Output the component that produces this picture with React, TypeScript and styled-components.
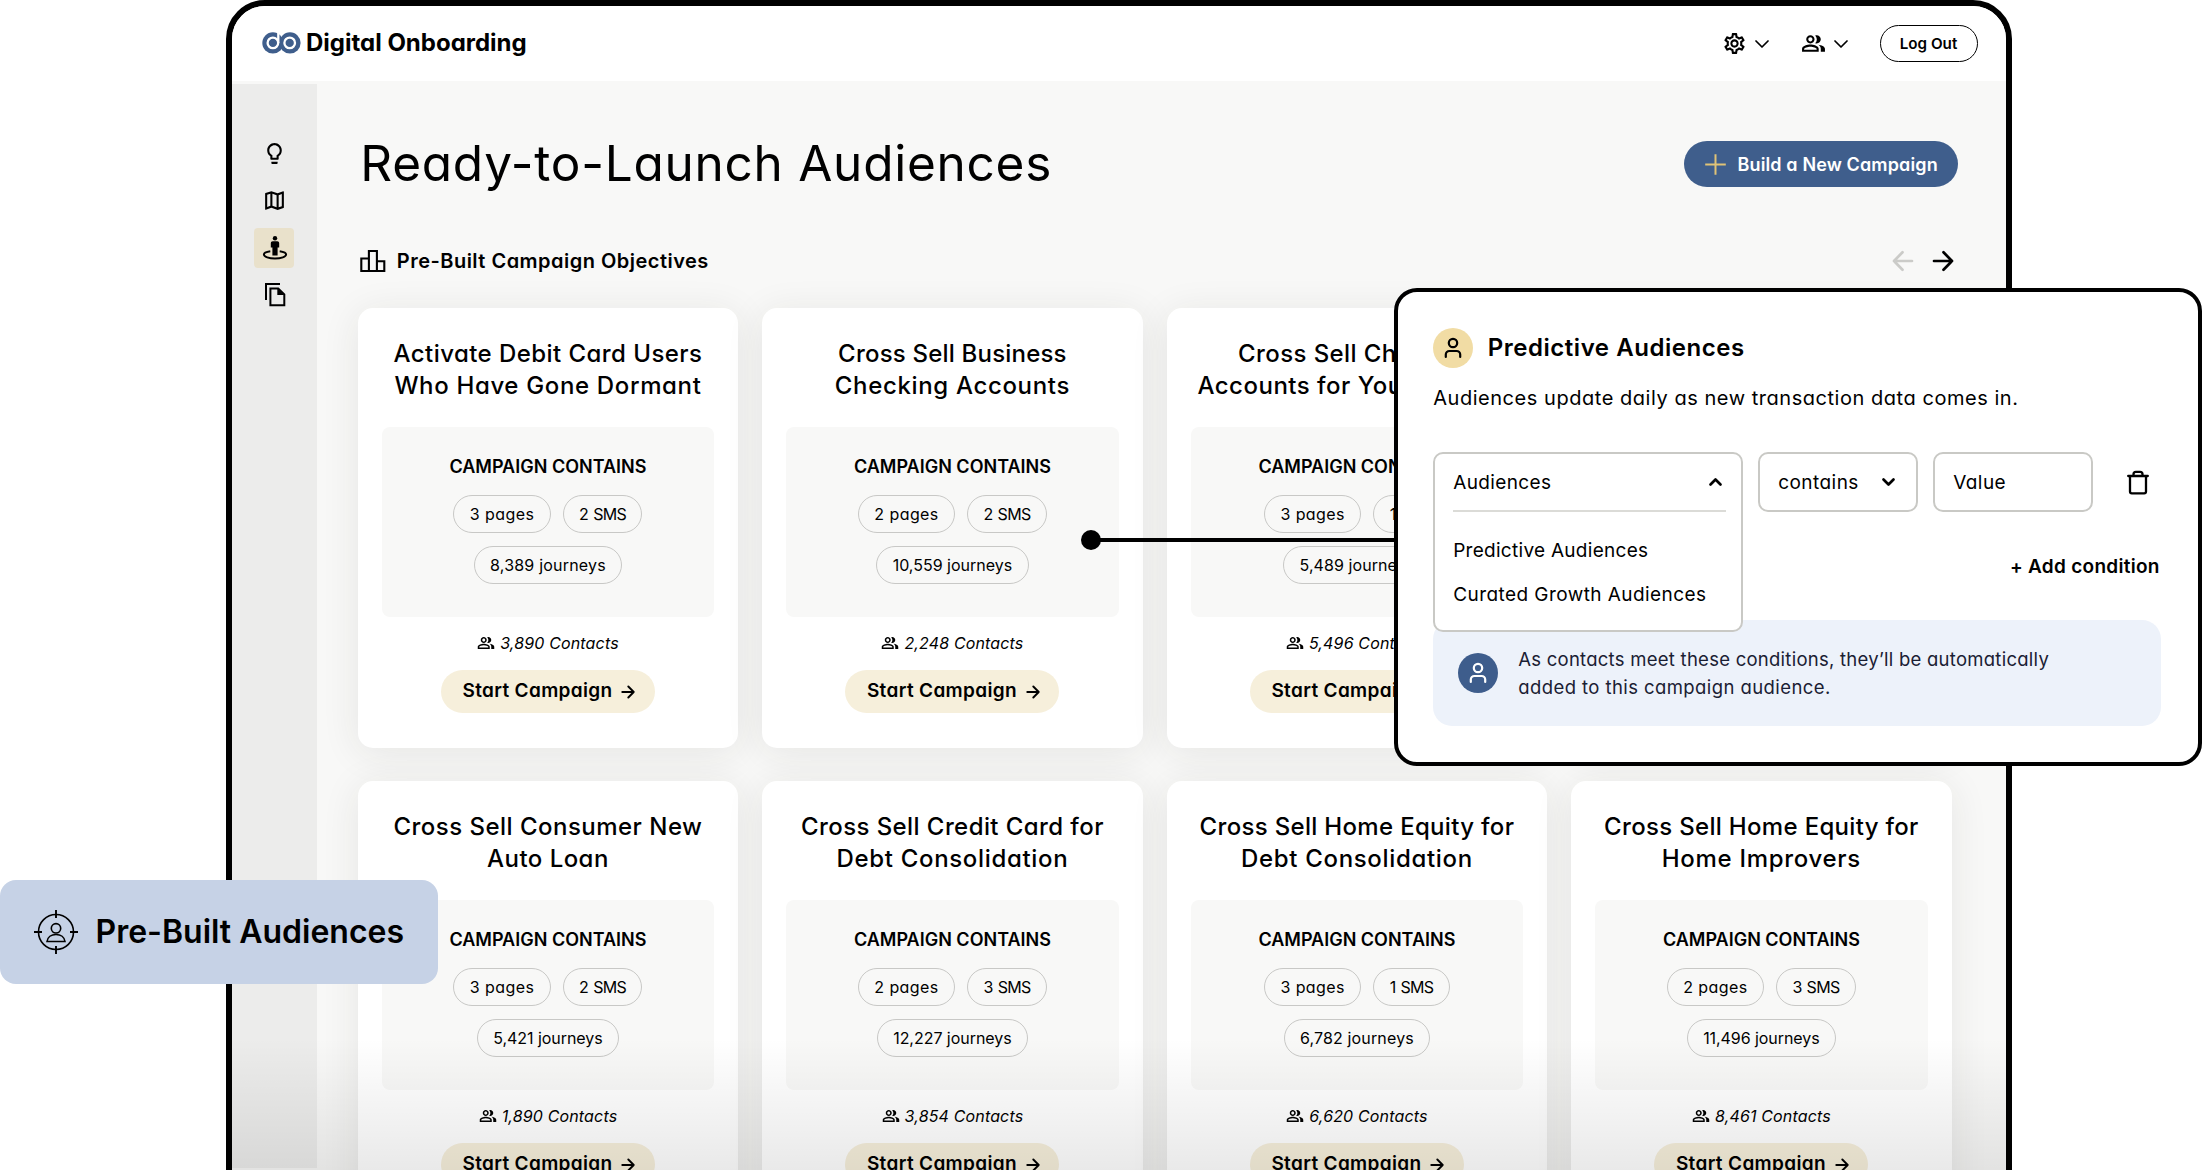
import React from 'react';
import styled, { createGlobalStyle } from 'styled-components';
import { MdLightbulbOutline, MdOutlineMap, MdOutlinePeopleAlt, MdOutlineSettings } from 'react-icons/md';

const GlobalStyle = createGlobalStyle`
  * { box-sizing: border-box; }
  body {
    margin: 0;
    background: #fff;
    color: #000;
    font-family: Inter, 'Open Sans', sans-serif;
    font-feature-settings: 'cv11';
  }
  svg { display: block; flex: none; }
`;

const Stage = styled.div`
  position: relative;
  width: 2202px;
  height: 1170px;
  overflow: hidden;
`;

const Frame = styled.div`
  position: relative;
  display: flex;
  flex-direction: column;
  width: 1786px;
  height: 1220px;
  margin-left: 226px;
  border: 6px solid #000;
  border-radius: 39px;
  background: #f8f8f7;
  overflow: hidden;
`;

const Header = styled.header`
  display: flex;
  flex: none;
  align-items: center;
  justify-content: space-between;
  height: 75px;
  padding: 0 28.5px 0 30px;
  background: #fff;
`;

const Brand = styled.div`
  display: flex;
  align-items: center;
  gap: 5px;
  margin-top: -1px;
  font-size: 24px;
  font-weight: 700;
  letter-spacing: 0;
  line-height: 30px;
`;

const HeaderActions = styled.div`
  display: flex;
  align-items: center;
`;

const MenuTrigger = styled.div`
  display: flex;
  align-items: center;
  gap: 8px;
  margin-right: 32px;
`;

const LogOut = styled.button`
  width: 98px;
  height: 37px;
  padding: 0;
  border: 1.4px solid #000;
  border-radius: 19px;
  background: #fff;
  color: #000;
  font: 600 15.2px/34px Inter, sans-serif;
  font-feature-settings: 'cv11';
`;

const Body = styled.div`
  display: flex;
  flex: 1;
`;

const Sidebar = styled.nav`
  display: flex;
  flex-direction: column;
  align-items: center;
  gap: 7.5px;
  width: 84.5px;
  height: 1084px;
  margin-top: 3px;
  padding: 50px 0 0 1px;
  background: #ececeb;
`;

const NavItem = styled.div<{ $active?: boolean }>`
  display: flex;
  align-items: center;
  justify-content: center;
  width: 39.5px;
  height: 39.5px;
  margin-left: -2px;
  padding-left: 2px;
  border-radius: 4px;
  background: ${(p) => (p.$active ? '#e9e1cb' : 'transparent')};
`;

const Main = styled.main`
  flex: 1;
  padding: 60px 0 0 41.3px;
`;

const TitleRow = styled.div`
  display: flex;
  align-items: center;
  justify-content: space-between;
  height: 46px;
  padding: 0 48.5px 0 2.5px;
`;

const PageTitle = styled.h1`
  margin: 0;
  padding-bottom: 3px;
  font-size: 49.5px;
  font-weight: 400;
  letter-spacing: 0.75px;
  line-height: 44px;
`;

const BuildButton = styled.button`
  display: flex;
  align-items: center;
  gap: 12px;
  width: 274px;
  height: 46px;
  padding: 1px 0 0 21px;
  border: 0;
  border-radius: 23px;
  background: #3f5e8c;
  color: #fff;
  font: 600 18px/24px Inter, sans-serif;
  font-feature-settings: 'cv11';
  letter-spacing: 0.13px;
`;

const SectionRow = styled.div`
  display: flex;
  align-items: center;
  justify-content: space-between;
  height: 30px;
  margin-top: 58.5px;
  padding: 0 52px 0 2px;
`;

const SectionTitle = styled.h2`
  display: flex;
  align-items: center;
  gap: 11px;
  margin: 0;
  font-size: 20px;
  font-weight: 600;
  letter-spacing: 0.48px;
  line-height: 30px;
`;

const Pager = styled.div`
  display: flex;
  gap: 18px;
`;

const CardGrid = styled.div`
  display: grid;
  grid-template-columns: repeat(4, 380.3px);
  gap: 32.5px 24.2px;
  margin-top: 32px;
`;

const Card = styled.article`
  display: flex;
  flex-direction: column;
  align-items: center;
  height: 440.5px;
  padding-top: 30.2px;
  border-radius: 15px;
  background: #fff;
  box-shadow: 0 5px 38px rgba(40, 40, 35, 0.09);
`;

const CardTitle = styled.h3`
  margin: 0;
  font-size: 24px;
  font-weight: 500;
  line-height: 32px;
  text-align: center;
`;

const TitleLine = styled.span<{ $ls: number }>`
  display: block;
  letter-spacing: ${(p) => p.$ls}px;
  white-space: nowrap;
`;

const Contents = styled.section`
  display: flex;
  flex-direction: column;
  align-items: center;
  gap: 12.3px;
  width: 332.5px;
  height: 190px;
  margin-top: 25.3px;
  padding-top: 28px;
  border-radius: 8px;
  background: #f8f8f7;
`;

const ContentsLabel = styled.div`
  margin-bottom: 3.5px;
  font-size: 18px;
  font-weight: 600;
  line-height: 24px;
`;

const PillRow = styled.div`
  display: flex;
  gap: 12px;
`;

const Pill = styled.span<{ $ls: number; $ws?: number }>`
  height: 38.7px;
  padding: 0 15.4px;
  border: 1.4px solid #c8c8c6;
  border-radius: 20px;
  font-size: 16px;
  letter-spacing: ${(p) => p.$ls}px;
  word-spacing: ${(p) => p.$ws ?? 0}px;
  line-height: 36.5px;
`;

const Contacts = styled.div`
  display: flex;
  align-items: center;
  gap: 5px;
  height: 24px;
  margin-top: 13.6px;
  font-size: 16px;
  font-style: italic;
  letter-spacing: 0.15px;
`;

const StartButton = styled.button`
  display: flex;
  align-items: center;
  gap: 9px;
  width: 214px;
  height: 42.7px;
  margin-top: 15.4px;
  padding: 0 0 1px 21.5px;
  border: 0;
  border-radius: 22px;
  background: #f6efdb;
  color: #000;
  font: 600 19px/24px Inter, sans-serif;
  font-feature-settings: 'cv11';
  letter-spacing: 0.34px;

  svg { position: relative; top: 1px; }
`;

const BottomShade = styled.div`
  position: absolute;
  inset: 1032px 0 44px 0;
  background: linear-gradient(rgba(0, 0, 0, 0), rgba(0, 0, 0, 0.085));
  pointer-events: none;
`;

const Connector = styled.div`
  position: absolute;
  top: 530px;
  left: 1081px;
  display: flex;
  align-items: center;
  width: 320px;
  height: 20px;

  &::before { content: ''; width: 20px; height: 20px; border-radius: 50%; background: #000; }
  &::after { content: ''; flex: 1; height: 4px; margin-left: -2px; background: #000; }
`;

const Popover = styled.section`
  position: absolute;
  top: 288.3px;
  left: 1393.7px;
  width: 808px;
  height: 477.5px;
  padding: 35.7px 36px 0 35.5px;
  border: 4px solid #000;
  border-radius: 23px;
  background: #fff;
`;

const PopoverHeading = styled.div`
  display: flex;
  align-items: center;
  gap: 14.5px;
  height: 40px;
  font-size: 24px;
  font-weight: 600;
  letter-spacing: 0.54px;
  line-height: 30px;
`;

const Avatar = styled.span<{ $bg: string; $fg: string }>`
  display: flex;
  flex: none;
  align-items: center;
  justify-content: center;
  width: 40px;
  height: 40px;
  border-radius: 50%;
  background: ${(p) => p.$bg};
  color: ${(p) => p.$fg};
`;

const Lead = styled.p`
  margin: 15.5px 0 0;
  font-size: 20px;
  letter-spacing: 0.54px;
  line-height: 30px;
  white-space: nowrap;
`;

const ConditionRow = styled.div`
  display: flex;
  gap: 15px;
  height: 60px;
  margin-top: 39px;
`;

const Field = styled.div<{ $w: number }>`
  display: flex;
  align-items: center;
  justify-content: space-between;
  width: ${(p) => p.$w}px;
  height: 60px;
  padding: 0 20.5px 0 18px;
  border: 2px solid #c9c9c5;
  border-radius: 10px;
  font-size: 19px;
  letter-spacing: 0.45px;
`;

const Dropdown = styled.div`
  position: relative;
  z-index: 1;
  width: 310px;
  height: 180px;
  padding: 0 15.5px 0 18px;
  border: 2px solid #c9c9c5;
  border-radius: 10px;
  background: #fff;
  font-size: 19px;
`;

const DropdownHead = styled.div`
  display: flex;
  align-items: center;
  justify-content: space-between;
  height: 58px;
  padding-right: 3px;
  border-bottom: 2px solid #dbdbd7;
  letter-spacing: 0.36px;
`;

const Option = styled.div<{ $ls: number }>`
  height: 44px;
  letter-spacing: ${(p) => p.$ls}px;
  line-height: 44px;
  white-space: nowrap;

  &:nth-child(2) { margin-top: 17px; }
`;

const TrashSlot = styled.div`
  display: flex;
  align-items: center;
  padding-left: 18.5px;
`;

const AddCondition = styled.div`
  height: 30px;
  margin: 39.5px 2px 0 0;
  font-size: 19px;
  font-weight: 600;
  letter-spacing: 0.28px;
  line-height: 30px;
  text-align: right;
`;

const Info = styled.div`
  display: flex;
  align-items: center;
  gap: 20.5px;
  width: 728px;
  height: 105.7px;
  margin-top: 38.2px;
  padding-left: 24.5px;
  border-radius: 19px;
  background: #edf2fa;
  color: #1a2033;
  font-size: 18.5px;
  line-height: 28px;
`;

const InfoLine = styled.div<{ $ls: number }>`
  letter-spacing: ${(p) => p.$ls}px;
  white-space: nowrap;
`;

const Badge = styled.div`
  position: absolute;
  top: 880px;
  left: 0;
  display: flex;
  align-items: center;
  gap: 17.5px;
  width: 438px;
  height: 104px;
  padding-left: 34px;
  border-radius: 16px;
  background: #c6d2e6;
  font-size: 32px;
  font-weight: 600;
  font-feature-settings: normal;
  line-height: 40px;
`;

const Logo = () => (
  <svg width="39" height="22" viewBox="0 0 39 22">
    <circle cx="10.9" cy="10.9" r="10.6" fill="#3f5e8c" />
    <circle cx="28" cy="10.9" r="10.6" fill="#3f5e8c" />
    <circle cx="10.9" cy="10.9" r="5.3" fill="none" stroke="#fff" strokeWidth="2.3" />
    <circle cx="27.7" cy="10.9" r="5.3" fill="none" stroke="#fff" strokeWidth="2.3" />
    <path d="M16.3 0V11" stroke="#fff" strokeWidth="2.3" />
  </svg>
);

const Chevron = ({ up, weight, width = 14 }: { up?: boolean; weight: number; width?: number }) => (
  <svg width={width} height="10" viewBox="0 0 14 10" fill="none" stroke="currentColor" strokeWidth={weight} strokeLinecap="round" strokeLinejoin="round">
    <path d={up ? 'M2 7.5 7 2.5 12 7.5' : weight < 2 ? 'M1 2 7 8 13 2' : 'M2 2.5 7 7.5 12 2.5'} />
  </svg>
);

const PlusIcon = () => (
  <svg width="21" height="21" viewBox="0 0 21 21" fill="none" stroke="#e0c377" strokeWidth="2">
    <path d="M10.5 0.2V20.8M0.2 10.5H20.8" />
  </svg>
);

const Arrow = ({ size, weight, color = '#000', left }: { size: number; weight: number; color?: string; left?: boolean }) => (
  <svg width={size} height={size} viewBox="0 0 22 22" fill="none" stroke={color} strokeWidth={weight} strokeLinecap="round" strokeLinejoin="round">
    <path d={left ? 'M20 11H2M10.5 2.3 2 11l8.5 8.7' : 'M2 11H20M11.5 2.3 20 11l-8.5 8.7'} />
  </svg>
);

const PodiumIcon = () => (
  <svg width="26" height="24" viewBox="0 0 26 24" fill="none" stroke="#000" strokeWidth="2.1">
    <path d="M1.3 22V9.5H8.9V22ZM8.9 22V2H16.9V22ZM16.9 22V12.3H24.3V22Z" />
  </svg>
);

const StandingIcon = () => (
  <svg width="26" height="26" viewBox="0 0 26 26">
    <circle cx="13" cy="3.2" r="2.2" />
    <path d="M10.8 6.2h4.4c1.2 0 2 .8 2 2v4.2h-1.6V20.6h-5.2v-8.2H8.8V8.2c0-1.2.8-2 2-2Z" />
    <path d="M8.3 16.3C4 16.9 1.9 18.2 1.9 19.6c0 2.2 5 3.9 11.1 3.9s11.1-1.7 11.1-3.9c0-1.4-2.1-2.7-6.4-3.3" fill="none" stroke="#000" strokeWidth="2" />
  </svg>
);

const CopyIcon = () => (
  <svg width="22" height="25" viewBox="0 0 22 25" fill="none" stroke="#000" strokeWidth="2">
    <path d="M2 18V2H16" />
    <path d="M6.4 6.5H14.2L20.3 12.5V23.2H6.4Z" />
    <path d="M13.3 6.5V13H20Z" fill="#000" stroke="none" />
  </svg>
);

const PersonIcon = () => (
  <svg width="20" height="22" viewBox="0 0 20 22" fill="none" stroke="currentColor" strokeWidth="2.2" strokeLinecap="round" strokeLinejoin="round">
    <circle cx="10" cy="6" r="4.2" />
    <path d="M2.8 20V17.6a3.6 3.6 0 0 1 3.6-3.6h7.2a3.6 3.6 0 0 1 3.6 3.6V20" />
  </svg>
);

const TrashIcon = () => (
  <svg width="22" height="25" viewBox="0 0 22 25" fill="none" stroke="#000" strokeWidth="2.3" strokeLinecap="round" strokeLinejoin="round">
    <path d="M1.2 6H20.8M3 6V21.5a1.8 1.8 0 0 0 1.8 1.8h12.4a1.8 1.8 0 0 0 1.8-1.8V6M6.5 6V4.2A2.4 2.4 0 0 1 8.9 1.8h4.2a2.4 2.4 0 0 1 2.4 2.4V6" />
  </svg>
);

const TargetIcon = () => (
  <svg width="44" height="44" viewBox="0 0 44 44" fill="none" stroke="#000" strokeWidth="1.6">
    <circle cx="22" cy="22" r="17.5" />
    <path d="M22 0V8M22 36V44M0 22H8M36 22H44" strokeWidth="1.9" />
    <circle cx="22" cy="18.3" r="4.7" />
    <path d="M13 31.5c.6-4.3 4.200-7 9-7s8.400 2.700 9 7Z" />
  </svg>
);

type Line = { text: string; ls: number };
type Campaign = { title: Line[]; pages: string; sms: string; journeys: Line; contacts: string };

const line = (text: string, ls: number): Line => ({ text, ls });

const topRow: Campaign[] = [
  { title: [line('Activate Debit Card Users', 0.44), line('Who Have Gone Dormant', 0.65)], pages: '3 pages', sms: '2 SMS', journeys: line('8,389 journeys', 0.2), contacts: '3,890 Contacts' },
  { title: [line('Cross Sell Business', 0.2), line('Checking Accounts', 0.66)], pages: '2 pages', sms: '2 SMS', journeys: line('10,559 journeys', 0), contacts: '2,248 Contacts' },
  { title: [line('Cross Sell Checking', 0.4), line('Accounts for Young Adults', 0.5)], pages: '3 pages', sms: '1 SMS', journeys: line('5,489 journeys', 0.08), contacts: '5,496 Contacts' },
];

const bottomRow: Campaign[] = [
  { title: [line('Cross Sell Consumer New', 0.48), line('Auto Loan', 0.46)], pages: '3 pages', sms: '2 SMS', journeys: line('5,421 journeys', -0.05), contacts: '1,890 Contacts' },
  { title: [line('Cross Sell Credit Card for', 0.42), line('Debt Consolidation', 0.67)], pages: '2 pages', sms: '3 SMS', journeys: line('12,227 journeys', -0.04), contacts: '3,854 Contacts' },
  { title: [line('Cross Sell Home Equity for', 0.32), line('Debt Consolidation', 0.67)], pages: '3 pages', sms: '1 SMS', journeys: line('6,782 journeys', 0.15), contacts: '6,620 Contacts' },
  { title: [line('Cross Sell Home Equity for', 0.32), line('Home Improvers', 0.7)], pages: '2 pages', sms: '3 SMS', journeys: line('11,496 journeys', -0.06), contacts: '8,461 Contacts' },
];

const CampaignCard = ({ data }: { data: Campaign }) => (
  <Card>
    <CardTitle>
      {data.title.map((l) => (
        <TitleLine key={l.text} $ls={l.ls}>{l.text}</TitleLine>
      ))}
    </CardTitle>
    <Contents>
      <ContentsLabel>CAMPAIGN CONTAINS</ContentsLabel>
      <PillRow>
        <Pill $ls={0.42}>{data.pages}</Pill>
        <Pill $ls={-0.7} $ws={1.2}>{data.sms}</Pill>
      </PillRow>
      <Pill $ls={data.journeys.ls}>{data.journeys.text}</Pill>
    </Contents>
    <Contacts>
      <MdOutlinePeopleAlt size={18} />
      {data.contacts}
    </Contacts>
    <StartButton>
      Start Campaign
      <Arrow size={14} weight={3} />
    </StartButton>
  </Card>
);

export default function App() {
  return (
    <Stage>
      <GlobalStyle />
      <Frame>
        <Header>
          <Brand>
            <Logo />
            Digital Onboarding
          </Brand>
          <HeaderActions>
            <MenuTrigger>
              <MdOutlineSettings size={25} />
              <Chevron weight={1.7} />
            </MenuTrigger>
            <MenuTrigger>
              <MdOutlinePeopleAlt size={25} />
              <Chevron weight={1.7} />
            </MenuTrigger>
            <LogOut>Log Out</LogOut>
          </HeaderActions>
        </Header>
        <Body>
          <Sidebar>
            <NavItem><MdLightbulbOutline size={25} /></NavItem>
            <NavItem><MdOutlineMap size={25} /></NavItem>
            <NavItem $active><StandingIcon /></NavItem>
            <NavItem><CopyIcon /></NavItem>
          </Sidebar>
          <Main>
            <TitleRow>
              <PageTitle>Ready-to-Launch Audiences</PageTitle>
              <BuildButton>
                <PlusIcon />
                Build a New Campaign
              </BuildButton>
            </TitleRow>
            <SectionRow>
              <SectionTitle>
                <PodiumIcon />
                Pre-Built Campaign Objectives
              </SectionTitle>
              <Pager>
                <Arrow size={22} weight={2.7} color="#cbcbc8" left />
                <Arrow size={22} weight={2.7} />
              </Pager>
            </SectionRow>
            <CardGrid>
              {topRow.map((c) => (
                <CampaignCard key={c.contacts} data={c} />
              ))}
              <Card />
              {bottomRow.map((c) => (
                <CampaignCard key={c.contacts} data={c} />
              ))}
            </CardGrid>
          </Main>
        </Body>
        <BottomShade />
      </Frame>

      <Connector />

      <Popover>
        <PopoverHeading>
          <Avatar $bg="#f1dca4" $fg="#000"><PersonIcon /></Avatar>
          Predictive Audiences
        </PopoverHeading>
        <Lead>Audiences update daily as new transaction data comes in.</Lead>
        <ConditionRow>
          <Dropdown>
            <DropdownHead>
              Audiences
              <Chevron up weight={2.7} width={15} />
            </DropdownHead>
            <Option $ls={0.28}>Predictive Audiences</Option>
            <Option $ls={0.43}>Curated Growth Audiences</Option>
          </Dropdown>
          <Field $w={160}>
            contains
            <Chevron weight={2.7} width={15} />
          </Field>
          <Field $w={160}>Value</Field>
          <TrashSlot><TrashIcon /></TrashSlot>
        </ConditionRow>
        <AddCondition>+ Add condition</AddCondition>
        <Info>
          <Avatar $bg="#3e5d8c" $fg="#fff"><PersonIcon /></Avatar>
          <div>
            <InfoLine $ls={0.26}>As contacts meet these conditions, they’ll be automatically</InfoLine>
            <InfoLine $ls={0.42}>added to this campaign audience.</InfoLine>
          </div>
        </Info>
      </Popover>

      <Badge>
        <TargetIcon />
        Pre-Built Audiences
      </Badge>
    </Stage>
  );
}
